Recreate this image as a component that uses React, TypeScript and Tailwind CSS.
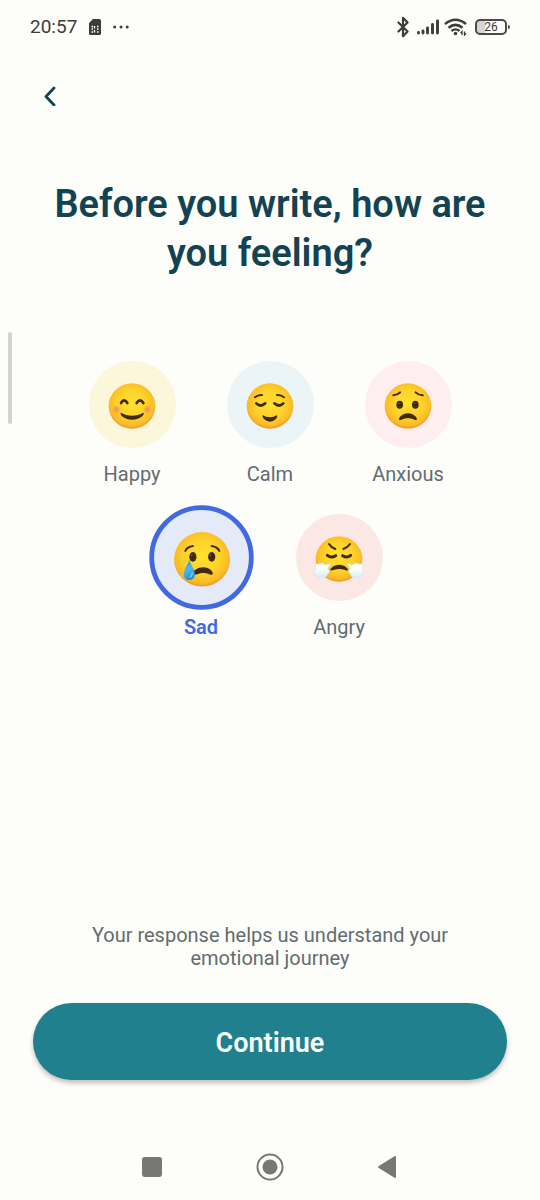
import { useState } from 'react';
import type { ReactNode } from 'react';
import { Bluetooth } from 'lucide-react';

interface Feeling {
    id: string;
    label: string;
    background: string;
    face: ReactNode;
}

const INK = '#43290b';

function Face({ children }: { children: ReactNode }) {
    return (
        <svg className="w-12 h-[46px] overflow-visible" viewBox="0 0 144 138" fill="none" aria-hidden="true">
            <ellipse cx="72" cy="69" rx="70" ry="68" fill="url(#faceFill)" />
            {children}
        </svg>
    );
}

function FaceDefs() {
    return (
        <svg className="absolute w-0 h-0" aria-hidden="true">
            <defs>
                <radialGradient id="faceFill" cx="0.5" cy="0.45" r="0.55">
                    <stop offset="0" stopColor="#ffe12e" />
                    <stop offset="0.55" stopColor="#fdd32a" />
                    <stop offset="0.88" stopColor="#fabb27" />
                    <stop offset="1" stopColor="#ee9428" />
                </radialGradient>
                <radialGradient id="cheek">
                    <stop offset="0" stopColor="#f28a63" />
                    <stop offset="0.5" stopColor="#f5965a" stopOpacity="0.7" />
                    <stop offset="1" stopColor="#fbb037" stopOpacity="0" />
                </radialGradient>
                <linearGradient id="tear" x1="0" y1="0" x2="0.3" y2="1">
                    <stop offset="0" stopColor="#2f8cc4" />
                    <stop offset="0.55" stopColor="#4bb8ee" />
                    <stop offset="1" stopColor="#2790d0" />
                </linearGradient>
                <linearGradient id="steam" x1="0" y1="0" x2="0" y2="1">
                    <stop offset="0.4" stopColor="#ffffff" />
                    <stop offset="1" stopColor="#d5edfb" />
                </linearGradient>
            </defs>
        </svg>
    );
}

const feelings: Feeling[] = [
    {
        id: 'happy',
        label: 'Happy',
        background: 'bg-[#fcf6da]',
        face: (
            <Face>
                <circle cx="25" cy="80" r="15" fill="url(#cheek)" />
                <circle cx="118" cy="80" r="15" fill="url(#cheek)" />
                <g stroke={INK} strokeWidth="8" strokeLinecap="round">
                    <path d="M39 60Q48 44 58 60" />
                    <path d="M86 60Q96 44 106 60" />
                </g>
                <path d="M39 89C58 101 86 101 106 89C112 92 98 110 72 110C47 110 33 92 39 89Z" fill={INK} />
            </Face>
        ),
    },
    {
        id: 'calm',
        label: 'Calm',
        background: 'bg-[#ebf5f8]',
        face: (
            <Face>
                <g stroke={INK} strokeLinecap="round">
                    <path d="M27 43Q36 35 48 36" strokeWidth="6" />
                    <path d="M93 36Q106 35 114 43" strokeWidth="6" />
                    <path d="M31 61Q44 74 58 61" strokeWidth="8" />
                    <path d="M85 61Q99 74 112 61" strokeWidth="8" />
                </g>
                <path d="M51 97C62 105 81 105 92 97C98 100 88 116 72 116C56 116 46 100 51 97Z" fill={INK} />
            </Face>
        ),
    },
    {
        id: 'anxious',
        label: 'Anxious',
        background: 'bg-[#ffeef0]',
        face: (
            <Face>
                <g stroke={INK} strokeWidth="6" strokeLinecap="round">
                    <path d="M28 37Q41 36 48 28" />
                    <path d="M95 28Q103 36 116 37" />
                </g>
                <ellipse cx="47" cy="65" rx="10" ry="12" fill={INK} />
                <ellipse cx="94" cy="65" rx="10" ry="12" fill={INK} />
                <circle cx="44" cy="61" r="2" fill="#7d5b3a" />
                <circle cx="91" cy="61" r="2" fill="#7d5b3a" />
                <path d="M46 111C42 106 54 91 72 91C90 91 102 106 98 111C91 112 86 106 72 106C58 106 53 112 46 111Z" fill={INK} />
            </Face>
        ),
    },
    {
        id: 'sad',
        label: 'Sad',
        background: 'bg-[#e4eaf8]',
        face: (
            <Face>
                <g stroke={INK} strokeWidth="5" strokeLinecap="round">
                    <path d="M30 48Q35 38 49 36" />
                    <path d="M96 36Q110 38 115 48" />
                </g>
                <ellipse cx="49" cy="63" rx="9" ry="12" fill={INK} />
                <ellipse cx="96" cy="63" rx="9" ry="12" fill={INK} />
                <circle cx="46" cy="59" r="2" fill="#7d5b3a" />
                <circle cx="93" cy="59" r="2" fill="#7d5b3a" />
                <path d="M50 107C45 101 58 89 75 89C91 89 102 102 98 107C92 109 88 103 75 103C62 103 57 109 50 107Z" fill={INK} />
                <path d="M40 70C43 82 54 94 54 106C54 116 48 121 40 121C32 121 26 116 26 106C26 94 37 82 40 70Z" fill="url(#tear)" />
                <path d="M47 102C48 107 46 111 42 113" stroke="#84d2f6" strokeWidth="3" strokeLinecap="round" />
            </Face>
        ),
    },
    {
        id: 'angry',
        label: 'Angry',
        background: 'bg-[#fbe8e4]',
        face: (
            <Face>
                <g stroke={INK} strokeLinecap="round">
                    <path d="M42 24Q48 34 61 39" strokeWidth="6" />
                    <path d="M105 24Q98 34 85 39" strokeWidth="6" />
                    <path d="M37 58Q49 67 62 59" strokeWidth="9" />
                    <path d="M83 59Q96 67 107 58" strokeWidth="9" />
                </g>
                <path d="M46 103C44 98 56 86 73 86C89 86 101 98 99 103C92 105 88 99 73 99C58 99 53 105 46 103Z" fill={INK} />
                <path d="M49 80C44 89 40 94 38 99C45 102 44 112 37 114C38 124 24 127 20 121C12 128 1 123 3 114C-5 112 -4 101 3 99C-3 91 4 80 13 84C18 79 26 81 29 86C36 86 43 84 49 80Z" fill="url(#steam)" stroke="#c0e3f5" strokeWidth="1.500" />
                <path d="M95 80C100 89 104 94 106 99C99 102 100 112 107 114C106 124 120 127 124 121C132 128 143 123 141 114C149 112 148 101 141 99C147 91 140 80 131 84C126 79 118 81 115 86C108 86 101 84 95 80Z" fill="url(#steam)" stroke="#c0e3f5" strokeWidth="1.500" />
            </Face>
        ),
    },
];

function StatusBar() {
    return (
        <div className="flex h-[54px] items-center justify-between px-[30px] text-[#3c3c3c]">
            <div className="flex items-center">
                <span className="text-[19px]">20:57</span>
                <svg className="ml-3 w-3 h-4" viewBox="0 0 12 16" aria-hidden="true">
                    <path d="M4 0H10.500Q12 0 12 1.500V14.500Q12 16 10.500 16H1.500Q0 16 0 14.500V4Z" fill="currentColor" />
                    <path d="M2.500 7.500H4M5.500 7V9.500M8 7.500H9.500M2.500 10H4M8 10H9.500M2.500 13H4M5.500 11V13.500M8 13H9.500" stroke="#fdfdf9" strokeWidth="1.300" />
                </svg>
                <svg className="ml-3 w-4 h-1" viewBox="0 0 16 4" fill="currentColor" aria-hidden="true">
                    <circle cx="1.700" cy="2" r="1.500" />
                    <circle cx="8" cy="2" r="1.500" />
                    <circle cx="14.200" cy="2" r="1.500" />
                </svg>
            </div>
            <div className="flex items-center">
                <Bluetooth className="w-[22px] h-[22px]" strokeWidth={2.4} aria-hidden="true" />
                <svg className="ml-[2px] w-6 h-4" viewBox="0 0 24 16" stroke="currentColor" strokeWidth="2.900" strokeLinecap="round" aria-hidden="true">
                    <path d="M2.500 13.500V14M7 12V14M11.500 9V14M16.500 5.500V14M21.500 2V14" />
                </svg>
                <svg className="ml-1 w-6 h-[18px]" viewBox="0 0 24 18" fill="none" stroke="currentColor" aria-hidden="true">
                    <path d="M1 6Q11.500 -2.500 22 6" strokeWidth="2.600" />
                    <path d="M4.500 9.700Q11.500 4 18.500 9.700" strokeWidth="2.500" />
                    <path d="M7.500 13Q11.500 9.800 15.500 13" strokeWidth="2.300" />
                    <circle cx="11.500" cy="15.500" r="1.800" fill="currentColor" stroke="none" />
                    <path d="M18 17V13.500L16.500 15M20.500 13.500V17L22 15.500" strokeWidth="1.300" />
                </svg>
                <div className="ml-[7px] flex h-4 w-8 items-center justify-center rounded-[5px] border-2 border-[#4a4a4a] bg-linear-to-r from-[#d5d5d3] from-30% to-transparent to-30% text-[12px] leading-none">
                    26
                </div>
                <div className="ml-px h-1 w-[2px] rounded-r-sm bg-[#4a4a4a]" />
            </div>
        </div>
    );
}

function NavigationBar() {
    return (
        <nav className="flex h-[66px] items-center justify-center gap-[78px] text-[#777775]" aria-label="System">
            <button type="button" aria-label="Recent apps" className="flex size-10 items-center justify-center">
                <span className="size-5 rounded-[3px] bg-current" />
            </button>
            <button type="button" aria-label="Home" className="flex size-10 items-center justify-center">
                <svg className="size-7" viewBox="0 0 28 28" aria-hidden="true">
                    <circle cx="14" cy="14" r="12.500" fill="none" stroke="currentColor" strokeWidth="2" />
                    <circle cx="14" cy="14" r="7.500" fill="currentColor" />
                </svg>
            </button>
            <button type="button" aria-label="Back" className="flex size-10 items-center justify-center">
                <svg className="w-5 h-6" viewBox="0 0 20 24" aria-hidden="true">
                    <path d="M1 12L17 2V22Z" fill="currentColor" stroke="currentColor" strokeWidth="2" strokeLinejoin="round" />
                </svg>
            </button>
        </nav>
    );
}

function App() {
    const [selected, setSelected] = useState('sad');

    return (
        <div className="relative flex min-h-screen flex-col bg-[#fdfdf9] font-['Roboto',sans-serif]">
            <FaceDefs />
            <div className="absolute left-2 top-[332px] h-[92px] w-1 rounded-full bg-[#d2d2cf]" />
            <StatusBar />

            <header className="px-[30px] pt-[22px]">
                <button type="button" aria-label="Go back" className="flex size-10 items-center justify-center text-[#134252]">
                    <svg className="w-3 h-5" viewBox="0 0 12 20" fill="none" stroke="currentColor" aria-hidden="true">
                        <path d="M10 2L2 10.500L10 19" strokeWidth="2.800" strokeLinecap="round" strokeLinejoin="round" />
                    </svg>
                </button>
            </header>

            <main className="flex flex-1 flex-col px-[33px]">
                <h1 className="mx-auto mt-16 max-w-[460px] text-center text-[38px] font-semibold leading-[49px] text-[#134252]">
                    Before you write, how are you feeling?
                </h1>

                <div className="mt-[83px] flex flex-wrap justify-center gap-y-7">
                    {feelings.map((feeling) => {
                        const active = feeling.id === selected;
                        return (
                            <button
                                key={feeling.id}
                                type="button"
                                aria-pressed={active}
                                onClick={() => setSelected(feeling.id)}
                                className="flex w-[138px] flex-col items-center gap-[14px]"
                            >
                                <span
                                    className={`flex size-[87px] items-center justify-center rounded-full pt-[2px] ${feeling.background} ${active ? 'scale-120 border-4 border-[#4169e1]' : ''}`}
                                >
                                    {feeling.face}
                                </span>
                                <span className={`text-[20px] leading-6 ${active ? 'font-semibold text-[#4169e1]' : 'text-[#626c71]'}`}>
                                    {feeling.label}
                                </span>
                            </button>
                        );
                    })}
                </div>

                <p className="mx-auto mt-auto max-w-[400px] text-center text-[20px] leading-[23px] text-[#626c71]">
                    Your response helps us understand your emotional journey
                </p>
                <button
                    type="button"
                    className="mt-[33px] mb-[54px] h-[77px] w-full rounded-full bg-[#21808d] pt-1 text-[27px] font-semibold text-[#fdfdf9] shadow-[0_3px_5px_rgba(0,0,0,0.25)]"
                >
                    Continue
                </button>
            </main>

            <NavigationBar />
        </div>
    );
}

export default App;
